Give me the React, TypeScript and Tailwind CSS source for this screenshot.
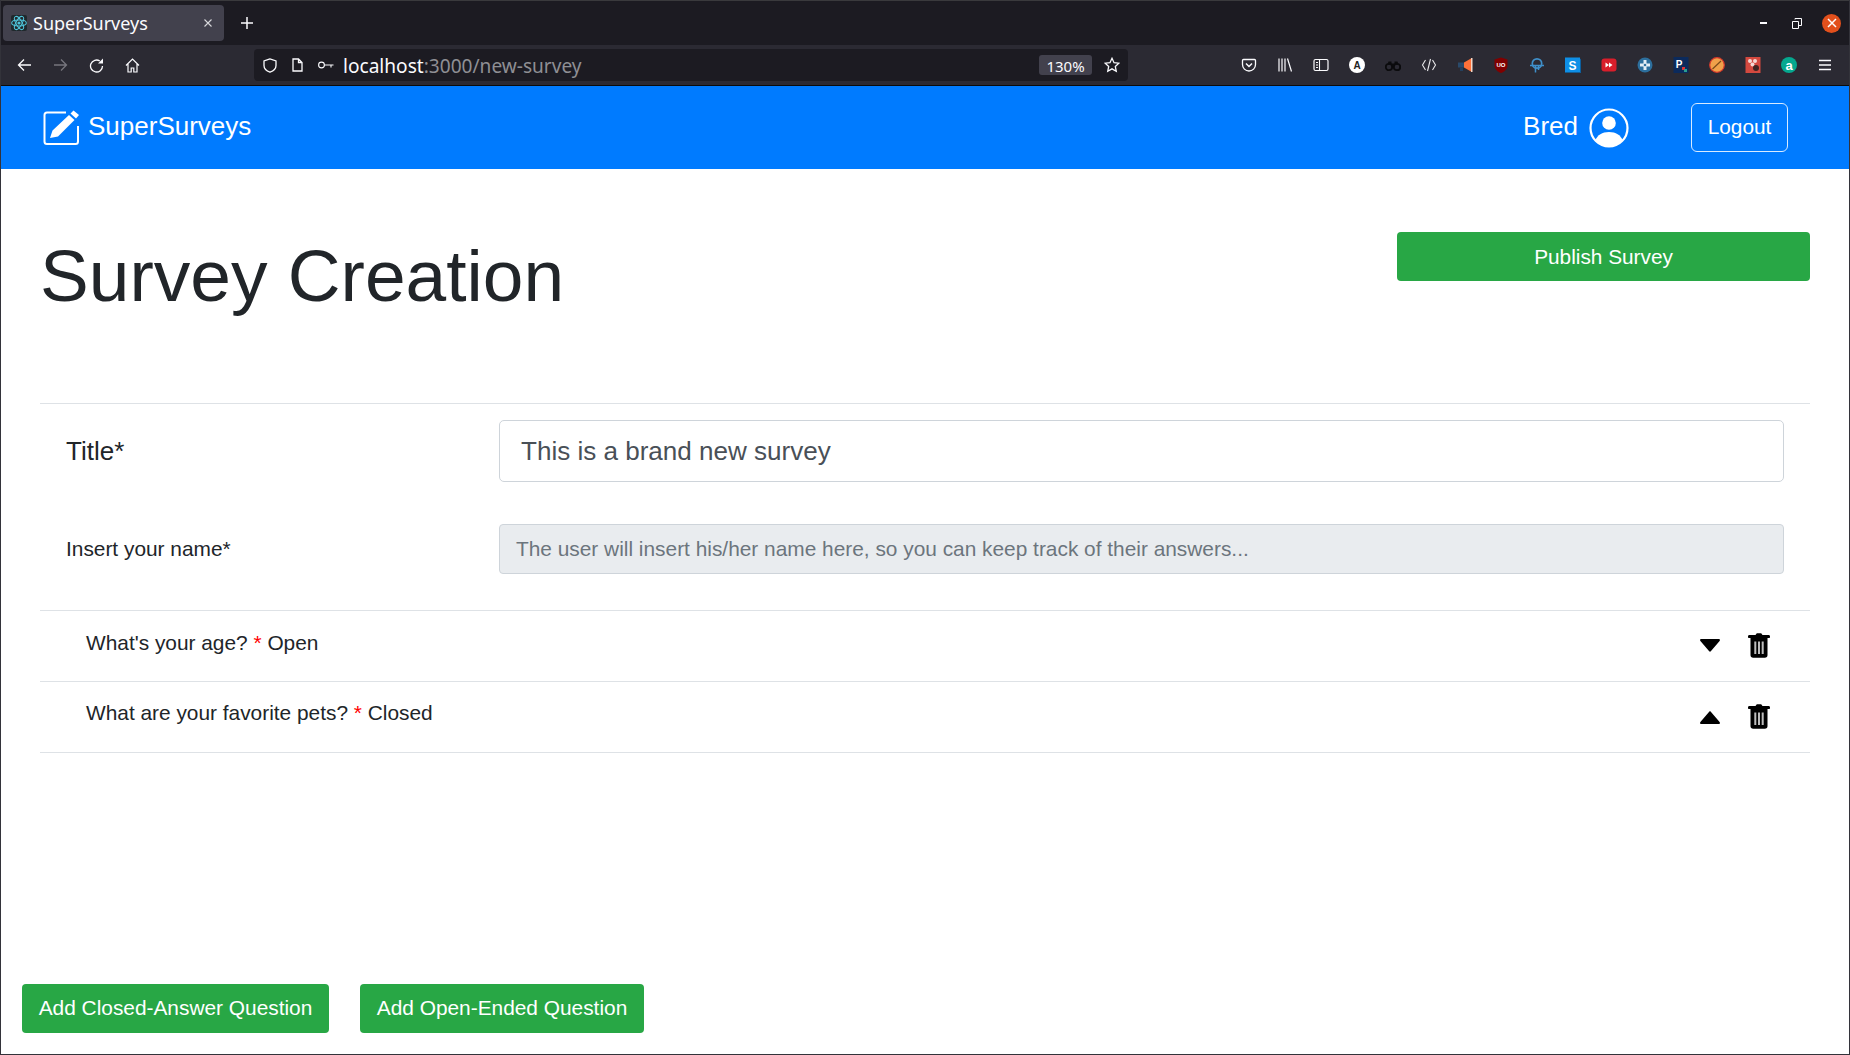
import React from "react";

const sans = "font-['Liberation_Sans',Arial,sans-serif]";
const chrome = "font-['Noto_Sans','Open_Sans',sans-serif]";

function Ext({ children, size = 16 }: { children: React.ReactNode; size?: number }) {
  return (
    <svg width={size} height={size} viewBox="0 0 16 16" className="shrink-0">
      {children}
    </svg>
  );
}

function Trash() {
  return (
    <svg width="22" height="25" viewBox="0 0 22 25" className="shrink-0">
      <path d="M7.500 2 8.800 .3h4.400L14.500 2H20.500c.9 0 1.500.6 1.500 1.400V4.200c0 .5-.3.8-.8.8H.8C.3 5 0 4.700 0 4.200V3.400C0 2.600.6 2 1.500 2z" fill="#000" />
      <path d="M2.500 5h17v17c0 1.800-1 2.800-2.700 2.800H5.200C3.500 24.800 2.500 23.800 2.500 22z" fill="#000" />
      <path d="M6.300 8.500h2v12.500h-2zM10 8.500h2v12.500h-2zM13.700 8.500h2v12.500h-2z" fill="#bdbdbd" />
    </svg>
  );
}

function Down() {
  return (
    <svg width="20" height="13" viewBox="0 0 20 13" className="mt-[6px] shrink-0">
      <path d="M1.200 0h17.600c1 0 1.500 1.100.8 1.900l-8.800 10.400c-.5.600-1.100.6-1.600 0L.4 1.900C-.3 1.100.2 0 1.200 0z" fill="#000" />
    </svg>
  );
}

function Up() {
  return (
    <svg width="20" height="13" viewBox="0 0 20 13" className="mt-[7px] shrink-0">
      <path d="M1.200 13h17.600c1 0 1.500-1.100.8-1.900L10.800.7c-.5-.6-1.100-.6-1.600 0L.4 11.100C-.3 11.900.2 13 1.200 13z" fill="#000" />
    </svg>
  );
}

function QuestionRow({ text, kind, up }: { text: string; kind: string; up?: boolean }) {
  return (
    <div className="flex h-[71px] items-start justify-between border-b border-[#dee2e6] pl-[46px] pr-[40px]">
      <p className={`${up ? "mt-[15px]" : "mt-[16px]"} text-[20.86px] leading-[31px] text-[#212529]`}>
        {text} <span className="text-[#ff0000]">*</span> {kind}
      </p>
      <div className="mt-[22px] flex items-start gap-[28px]">
        {up ? <Up /> : <Down />}
        <Trash />
      </div>
    </div>
  );
}

export default function App() {
  return (
    <div className={`flex h-[1055px] w-[1850px] flex-col overflow-hidden border-x border-b border-[#33333a] bg-white ${sans}`}>
      {/* browser tab strip */}
      <div className={`flex h-[45px] shrink-0 items-center border-t border-[#3a3a3d] bg-[#1c1b22] ${chrome}`}>
        <div className="ml-[2px] flex h-[36px] w-[221px] items-center rounded-[4px] bg-[#42414d] pl-[8px] pr-[11px]">
          <div className="flex h-[16px] w-[16px] items-center justify-center rounded-[2px] bg-[#20282c]">
            <svg width="16" height="16" viewBox="-12 -12 24 24" fill="none" stroke="#4fc3d9" strokeWidth="1.600">
              <circle r="2.400" fill="#4fc3d9" stroke="none" />
              <ellipse rx="11" ry="4.400" />
              <ellipse rx="11" ry="4.400" transform="rotate(60)" />
              <ellipse rx="11" ry="4.400" transform="rotate(120)" />
            </svg>
          </div>
          <span className="ml-[6px] flex-1 text-[18px] leading-none text-[#fbfbfe]">SuperSurveys</span>
          <svg width="10" height="10" viewBox="0 0 10 10" stroke="#d8d8dc" strokeWidth="1.100">
            <path d="M1.500 1.500l7 7M8.500 1.500l-7 7" />
          </svg>
        </div>
        <svg width="14" height="14" viewBox="0 0 14 14" stroke="#fbfbfe" strokeWidth="1.500" className="ml-[16px]">
          <path d="M7 1v12M1 7h12" />
        </svg>
        <div className="ml-auto flex items-center">
          <div className="h-[1.500px] w-[7px] bg-[#fbfbfe]" />
          <svg width="10" height="11" viewBox="0 0 10 11" fill="none" stroke="#fbfbfe" className="ml-[25px]">
            <path d="M.5 3.500h6v7h-6zM3 1.500V.5h6.500v7H7" />
          </svg>
          <div className="ml-[20px] mr-[8px] flex h-[19px] w-[19px] items-center justify-center rounded-full bg-[#e2501c]">
            <svg width="10" height="10" viewBox="0 0 10 10" stroke="#fff" strokeWidth="1.500">
              <path d="M1 1l8 8M9 1l-8 8" />
            </svg>
          </div>
        </div>
      </div>

      {/* browser toolbar */}
      <div className={`flex h-[40px] shrink-0 items-center bg-[#2b2a33] ${chrome}`}>
        <div className="flex w-[253px] items-center pl-[16px]">
          <svg width="15" height="14" viewBox="0 0 15 14" fill="none" stroke="#fbfbfe" strokeWidth="1.300">
            <path d="M14 7H1.500M7 1.500 1.500 7 7 12.500" />
          </svg>
          <svg width="15" height="14" viewBox="0 0 15 14" fill="none" stroke="#77767e" strokeWidth="1.300" className="ml-[21px]">
            <path d="M1 7h12.500M8 1.500 13.500 7 8 12.500" />
          </svg>
          <svg width="15" height="15" viewBox="0 0 15 15" fill="none" stroke="#fbfbfe" strokeWidth="1.300" className="ml-[21px]">
            <path d="M13.500 8A6 6 0 1 1 10.800 3" />
            <path d="M14 .5V5.500H9z" fill="#fbfbfe" stroke="none" />
          </svg>
          <svg width="15" height="15" viewBox="0 0 15 15" fill="none" stroke="#fbfbfe" strokeWidth="1.200" className="ml-[21px]">
            <path d="M1 7.500 7.500 1 14 7.500M3 6v8h3.200v-4h2.600v4H12V6" />
          </svg>
        </div>
        <div className="flex h-[32px] w-[874px] items-center rounded-[4px] bg-[#1c1b22] pl-[9px] pr-[8px]">
          <svg width="14" height="15" viewBox="0 0 14 15" fill="none" stroke="#fbfbfe" strokeWidth="1.300">
            <path d="M7 .9 1 3v4.500c0 3 2.500 5.500 6 6.700 3.500-1.200 6-3.700 6-6.700V3z" />
          </svg>
          <svg width="11" height="14" viewBox="0 0 11 14" fill="none" stroke="#fbfbfe" strokeWidth="1.300" className="ml-[15px]">
            <path d="M1 1h5.500L10 4.500V13H1zM6.500 1v3.500H10" />
          </svg>
          <svg width="16" height="8" viewBox="0 0 16 8" fill="none" stroke="#fbfbfe" strokeWidth="1.100" className="ml-[15px]">
            <circle cx="3.500" cy="4" r="2.900" />
            <path d="M6.400 4H15.500M13 4v2.500" />
          </svg>
          <span className="ml-[9px] mt-[3px] text-[19.100px] leading-none text-[#fbfbfe]">
            localhost<span className="text-[#8f8f94]">:3000/new-survey</span>
          </span>
          <div className="ml-auto flex h-[20px] w-[53px] items-center justify-center rounded-[3px] bg-[#42414d] pt-[3px] text-[15px] leading-none text-[#fbfbfe]">
            130%
          </div>
          <svg width="16" height="16" viewBox="0 0 15 15" fill="none" stroke="#fbfbfe" strokeWidth="1.200" className="ml-[12px]">
            <path d="M7.500 1.200 9.400 5.300l4.500.5-3.300 3.100.9 4.500-4-2.300-4 2.300.9-4.500L1.100 5.800l4.500-.5z" />
          </svg>
        </div>
        <div className="ml-[113px] flex items-center gap-[20px]">
          <Ext>
            <path d="M2.500 2.500h11c.6 0 1 .4 1 1v4a6.500 6.500 0 0 1-13 0v-4c0-.6.4-1 1-1z" fill="none" stroke="#fbfbfe" strokeWidth="1.300" />
            <path d="M5 6.500 8 9.500l3-3" fill="none" stroke="#fbfbfe" strokeWidth="1.500" />
          </Ext>
          <Ext>
            <path d="M2 1.500v13M5 1.500v13M8 1.500v13M10.500 1.500l4 13" fill="none" stroke="#fbfbfe" strokeWidth="1.200" />
          </Ext>
          <Ext>
            <rect x="1" y="2.500" width="14" height="11" rx="1.500" fill="none" stroke="#fbfbfe" strokeWidth="1.200" />
            <path d="M6.500 2.500v11M3 5.500h2M3 8h2M3 10.500h2" stroke="#fbfbfe" strokeWidth="1.100" />
          </Ext>
          <Ext>
            <circle cx="8" cy="8" r="8" fill="#fff" />
            <text x="8" y="11.500" textAnchor="middle" fontSize="10" fontWeight="700" fill="#222" fontFamily="Liberation Sans">A</text>
          </Ext>
          <Ext>
            <path d="M3.500 4.500h3v2h3v-2h3l1 3H2.500z" fill="#0b0b0d" />
            <circle cx="4" cy="10" r="3.200" fill="none" stroke="#0b0b0d" strokeWidth="1.800" />
            <circle cx="12" cy="10" r="3.200" fill="none" stroke="#0b0b0d" strokeWidth="1.800" />
            <rect x="6.500" y="7" width="3" height="2.500" fill="#0b0b0d" />
          </Ext>
          <Ext>
            <path d="M4.500 3 1.500 8l3 5M11.500 3l3 5-3 5M9.500 2 6.500 14" fill="none" stroke="#e8e8ea" strokeWidth="1.100" />
          </Ext>
          <Ext>
            <path d="M1 5.500h6v5H1z" fill="#2a4a6b" />
            <path d="M3 10.500h3V14H3z" fill="#24405e" />
            <path d="M7 5.500 14 1.500v13L7 10.500z" fill="#ff7139" />
            <path d="M14 1v14h1.500V1z" fill="#f5d6c6" />
          </Ext>
          <Ext>
            <path d="M8 .5 14.500 2.500v6c0 3.500-2.700 6-6.500 7.500-3.800-1.500-6.500-4-6.500-7.500v-6z" fill="#800000" />
            <text x="8" y="9.500" textAnchor="middle" fontSize="6" fontWeight="700" fill="#fff" fontFamily="Liberation Sans">UO</text>
          </Ext>
          <Ext>
            <circle cx="8" cy="6.500" r="4.700" fill="none" stroke="#3f8fc9" strokeWidth="1.700" />
            <path d="M1 8.500h14" stroke="#3f8fc9" strokeWidth="1.500" />
            <path d="M6.500 8v7.500M9.500 8v5" stroke="#3f8fc9" strokeWidth="1.500" />
          </Ext>
          <Ext>
            <rect x="0" y="0.500" width="15" height="15" fill="#0e8fe6" />
            <path d="M15 1.500l1 1V16H1.500l-1-.5H15z" fill="#0c5f9e" />
            <text x="7.500" y="12.500" textAnchor="middle" fontSize="12" fontWeight="700" fill="#fff" fontFamily="Liberation Sans">S</text>
          </Ext>
          <Ext>
            <rect x="0.500" y="1.500" width="15" height="13" rx="3" fill="#d81e2b" />
            <path d="M4.500 5.500 8 8l-3.500 2.500zM8 5.500 11.500 8 8 10.500z" fill="#fff" />
          </Ext>
          <Ext>
            <circle cx="8" cy="8" r="7.500" fill="#2d6f9d" />
            <path d="M6.500 3h3v3.500H13v3H9.500V13h-3V9.500H3v-3h3.500z" fill="#e4eef5" />
            <circle cx="8" cy="8" r="1.300" fill="#2d6f9d" />
          </Ext>
          <Ext>
            <rect width="15" height="16" x="0.500" fill="#0b2a5c" />
            <text x="6" y="10.500" textAnchor="middle" fontSize="10" fontWeight="700" fill="#fff" fontFamily="Liberation Sans">P</text>
            <rect x="9" y="10" width="3" height="3" fill="#d33" />
            <rect x="11" y="12" width="3" height="3" fill="#2a9d8f" />
          </Ext>
          <Ext>
            <circle cx="8" cy="8" r="7.300" fill="#f0a14a" stroke="#d8392b" strokeWidth="1.200" />
            <path d="M3.500 12 12 4" stroke="#7a4a1a" strokeWidth="1.200" />
          </Ext>
          <Ext>
            <rect width="15" height="16" x="0.500" fill="#d4493f" />
            <circle cx="5" cy="4" r="2" fill="#f4d8d4" />
            <circle cx="10" cy="4" r="2" fill="#f4d8d4" />
            <circle cx="7.500" cy="7.500" r="2" fill="#f4d8d4" />
            <circle cx="11" cy="11" r="3" fill="#3d2522" />
          </Ext>
          <Ext>
            <circle cx="8" cy="8" r="8" fill="#05a88f" />
            <text x="8" y="12.500" textAnchor="middle" fontSize="13" fontWeight="700" fill="#fff" fontFamily="Liberation Sans">a</text>
          </Ext>
          <svg width="16" height="12" viewBox="0 0 16 12" stroke="#fbfbfe" strokeWidth="1.300" className="shrink-0">
            <path d="M2 1.500h12M2 6h12M2 10.500h12" />
          </svg>
        </div>
      </div>
      <div className="h-[1px] shrink-0 bg-[#0c0c0d]" />

      {/* navbar */}
      <nav className="flex h-[83px] shrink-0 items-center bg-[#007bff] pl-[42px] pr-[61px] text-white">
        <svg width="38" height="38" viewBox="0 0 38 38" className="shrink-0">
          <path d="M35 17v15.500c0 1.400-1 2.500-2.400 2.500H4c-1.400 0-2.500-1.100-2.500-2.500V6c0-1.400 1.100-2.500 2.500-2.500H23" fill="none" stroke="#fff" strokeWidth="2" />
          <path d="M7 29l2.500-7.500L26 6l5.500 5L15 27.500zM27.500 4.500l3-3L36 6l-3 3.500z" fill="#fff" />
        </svg>
        <span className="mb-[3px] ml-[7px] text-[26px] leading-none">SuperSurveys</span>
        <div className="ml-auto flex items-center">
          <span className="mb-[3px] text-[26px] leading-none">Bred</span>
          <svg width="40" height="40" viewBox="0 0 40 40" className="ml-[11px] shrink-0">
            <circle cx="20" cy="20" r="18.500" fill="none" stroke="#fff" strokeWidth="2.200" />
            <circle cx="20" cy="15" r="6.800" fill="#fff" />
            <path d="M6.500 32c2-5 6.500-8 13.500-8s11.500 3 13.500 8A18 18 0 0 1 20 38.500 18 18 0 0 1 6.500 32z" fill="#fff" />
          </svg>
          <button className="ml-[62px] h-[49px] w-[97px] rounded-[6px] border border-[#d9ebff] text-[20.800px] leading-none text-white">
            Logout
          </button>
        </div>
      </nav>

      {/* page */}
      <main className="flex min-h-0 flex-1 flex-col">
        <div className="mx-[39px] flex h-[235px] shrink-0 items-start justify-between border-b border-[#dee2e6]">
          <h1 className="mt-[63px] text-[73.100px] font-normal leading-[87px] text-[#212529]">Survey Creation</h1>
          <button className="mt-[63px] h-[49px] w-[413px] rounded-[4px] bg-[#28a745] text-[20.800px] text-white">
            Publish Survey
          </button>
        </div>

        <div className="mx-[39px] h-[207px] shrink-0 border-b border-[#dee2e6] pl-[26px] pr-[26px]">
          <div className="mt-[16px] flex h-[62px] items-center">
            <label className="w-[433px] shrink-0 text-[26px] text-[#212529]">Title*</label>
            <div className="flex h-full flex-1 items-center rounded-[5px] border border-[#ced4da] bg-white px-[21px] pt-[1px] text-[26.050px] text-[#495057]">
              This is a brand new survey
            </div>
          </div>
          <div className="mt-[42px] flex h-[50px] items-center">
            <label className="w-[433px] shrink-0 text-[20.860px] text-[#212529]">Insert your name*</label>
            <div className="flex h-full flex-1 items-center rounded-[4px] border border-[#ced4da] bg-[#e9ecef] px-[16px] text-[20.870px] text-[#6c757d]">
              The user will insert his/her name here, so you can keep track of their answers...
            </div>
          </div>
        </div>

        <div className="mx-[39px] shrink-0">
          <QuestionRow text="What's your age?" kind="Open" />
          <QuestionRow text="What are your favorite pets?" kind="Closed" up />
        </div>

        <div className="mt-auto flex gap-[31px] pb-[21px] pl-[21px]">
          <button className="h-[49px] w-[307px] rounded-[4px] bg-[#28a745] pb-[2px] text-[20.860px] text-white">
            Add Closed-Answer Question
          </button>
          <button className="h-[49px] w-[284px] rounded-[4px] bg-[#28a745] pb-[2px] text-[20.860px] text-white">
            Add Open-Ended Question
          </button>
        </div>
      </main>
    </div>
  );
}
